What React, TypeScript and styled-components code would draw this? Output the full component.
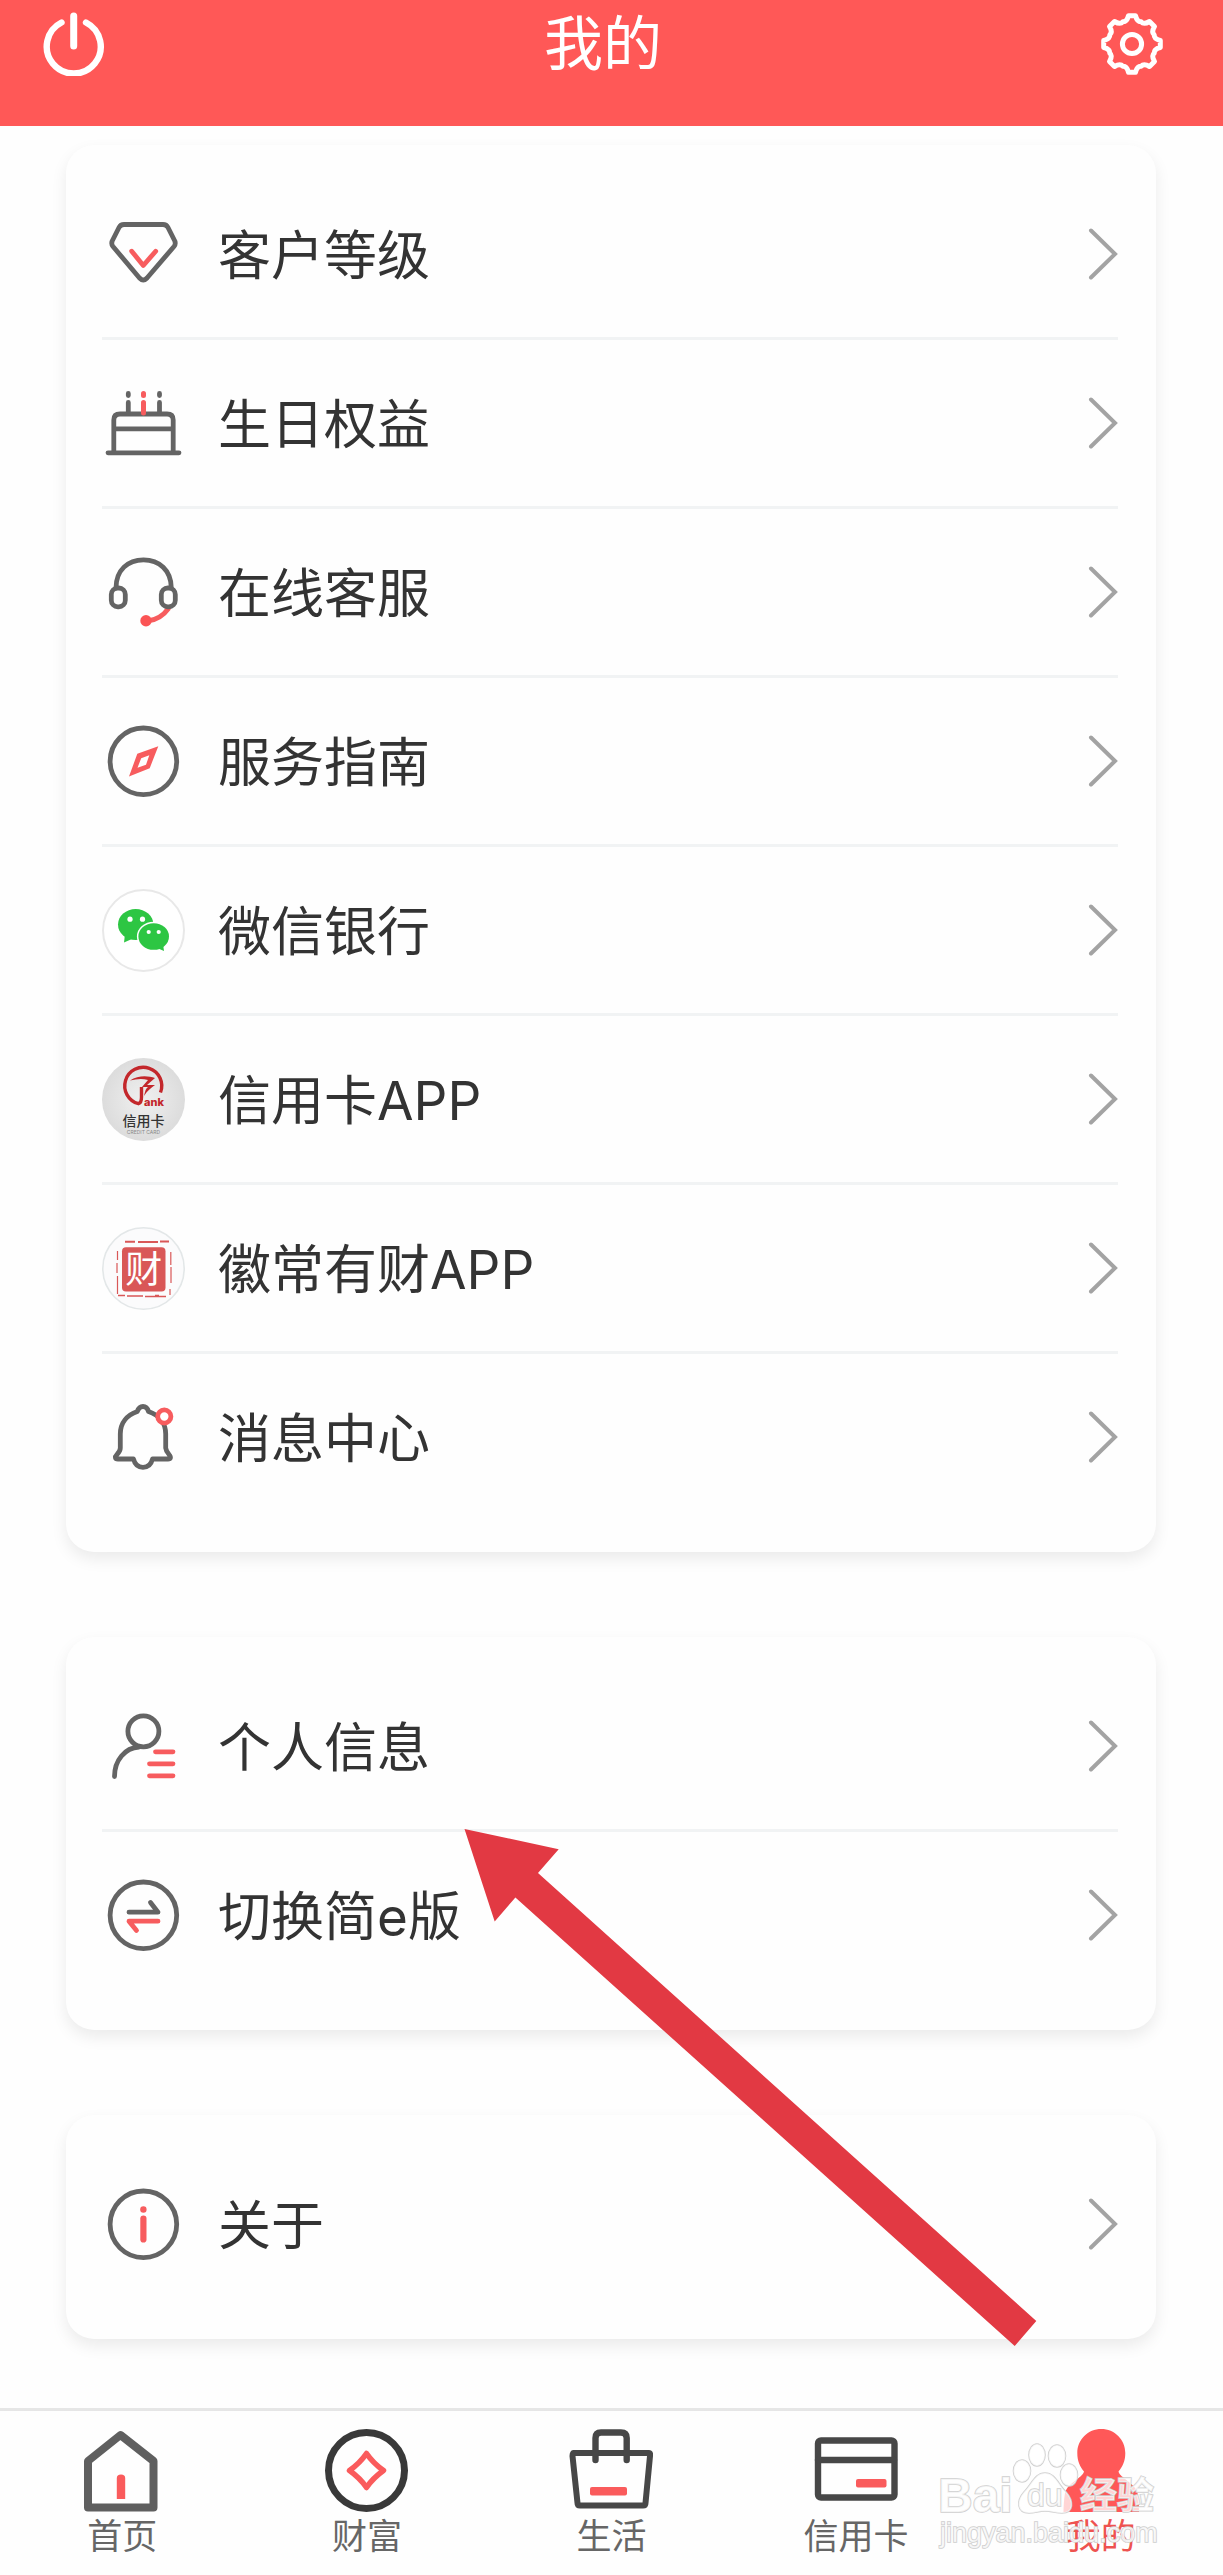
import React from "react";
import styled, { createGlobalStyle } from "styled-components";

const INK = "#646464";
const RED = "#f75c5e";
const FONT = '"Inter", "Noto Sans CJK SC", sans-serif';

const GlobalStyle = createGlobalStyle`
  *, *::before, *::after { box-sizing: border-box; }
  body { margin: 0; background: #fefefe; font-family: ${FONT}; color: #333; }
  button { font: inherit; color: inherit; background: none; border: 0; padding: 0; cursor: pointer; }
  svg { display: block; flex: none; }
`;

const Page = styled.div`
  display: flex;
  flex-direction: column;
  min-height: 100vh;
`;

const Header = styled.header`
  display: flex;
  align-items: center;
  justify-content: space-between;
  height: 126px;
  padding: 0 60px 38px 43px;
  background: #ff5857;
  color: #fff;
`;

const Title = styled.h1`
  margin: 0;
  font-size: 59px;
  line-height: 80px;
  font-weight: 400;
`;

const Main = styled.main`
  display: flex;
  flex: 1;
  flex-direction: column;
  gap: 85px;
  padding: 19px 67px 69px 66px;
`;

const Card = styled.section`
  position: relative;
  padding: 26px 38px 32px 36px;
  border-radius: 28px;
  background: #fefefe;
  box-shadow: 0 7px 16px rgba(0, 0, 0, 0.08);
`;

const List = styled.ul`
  margin: 0;
  padding: 0;
  list-style: none;
`;

const Item = styled.li`
  & + & {
    border-top: 3px solid #f1f3f4;
  }
`;

const Row = styled.button`
  display: flex;
  align-items: center;
  width: 100%;
  height: 166px;
  gap: 33px;
  text-align: left;
`;

const RowLabel = styled.span`
  flex: 1;
  padding-top: 3px;
  font-size: 53px;
  line-height: 72px;
`;

const Pointer = styled.svg`
  position: absolute;
  top: 192px;
  left: 398px;
  z-index: 2;
  pointer-events: none;
`;

const TabBar = styled.nav`
  position: relative;
  display: grid;
  grid-template-columns: repeat(5, 1fr);
  height: 167px;
  padding-top: 18px;
  border-top: 3px solid #e6e6e6;
`;

const Tab = styled.a<{ $active?: boolean }>`
  display: flex;
  flex-direction: column;
  align-items: center;
  gap: 3px;
  font-size: 35px;
  line-height: 40px;
  text-decoration: none;
  color: ${(p) => (p.$active ? "#ee5350" : "#666")};
`;

const Watermark = styled.svg`
  position: absolute;
  top: 29px;
  right: 63px;
  pointer-events: none;
`;

const Glyph = ({ children }: { children: React.ReactNode }) => (
  <svg width="83" height="83" viewBox="0 0 83 83" fill="none" stroke={INK} strokeWidth="4.800" strokeLinecap="round" strokeLinejoin="round" aria-hidden="true">
    {children}
  </svg>
);

const TabGlyph = ({ children }: { children: React.ReactNode }) => (
  <svg width="84" height="84" viewBox="0 0 84 84" fill="none" strokeLinecap="round" strokeLinejoin="round" aria-hidden="true">
    {children}
  </svg>
);

const Diamond = () => (
  <Glyph>
    <path d="M22 11.500H61Q64.500 11.500 66 14.500L72.800 28Q74 31 72 33.500L45 65Q41.300 69 37.500 65L11 33.500Q9 31 10.200 28L17 14.500Q18.500 11.500 22 11.500Z" />
    <path d="M29.700 38.200L41.300 52.500L53.700 38.200" stroke={RED} />
  </Glyph>
);

const Cake = () => (
  <Glyph>
    <path d="M6 70.800H77M11.800 70V38Q11.800 32 18 32H65Q71.200 32 71.200 38V70M12 46.800H71" />
    <path d="M26.300 20.500V31M26.300 11.500V13.500M57.500 20.500V31M57.500 11.500V13.500" />
    <path d="M41.500 20.500V31M41.500 11.500V13.500" stroke={RED} strokeWidth="5" />
  </Glyph>
);

const Headset = () => (
  <Glyph>
    <path d="M66.500 57.500C61 65 55 69 46 69.800" stroke={RED} />
    <path d="M14 37C14 19 26 8.800 41.500 8.800C57 8.800 69.300 19 69.300 37" />
    <rect x="9.300" y="37" width="14" height="18.800" rx="6.500" />
    <rect x="59.300" y="37" width="14" height="18.800" rx="6.500" />
    <circle cx="44" cy="69.800" r="5.700" fill="#fb5455" stroke="none" />
  </Glyph>
);

const Compass = () => (
  <Glyph>
    <circle cx="41.400" cy="41.300" r="33.300" />
    <path d="M56.300 26.200L35.300 33.800L27 56.500L47.700 48.200ZM47.300 35.300L44 44.800L35.500 47.800L39.200 38.200Z" fill={RED} fillRule="evenodd" stroke="none" />
  </Glyph>
);

const WeChat = () => (
  <Glyph>
    <circle cx="41.500" cy="41.500" r="40.500" fill="#fff" stroke="#e8e8e8" strokeWidth="2" />
    <g fill="#2dc643" stroke="none">
      <ellipse cx="33.700" cy="35.500" rx="17.700" ry="15.500" />
      <path d="M23 45L22 53.500L31 49.500Z" />
      <ellipse cx="51.700" cy="47.500" rx="16.800" ry="14.800" fill="#fff" />
      <ellipse cx="51.700" cy="47.500" rx="15.300" ry="13.300" />
      <path d="M61 55L62 62L54 58.500Z" />
    </g>
    <g fill="#fff" stroke="none">
      <circle cx="28" cy="30.200" r="2.600" />
      <circle cx="40.500" cy="30.200" r="2.600" />
      <circle cx="46.700" cy="43" r="2.100" />
      <circle cx="56.700" cy="43" r="2.100" />
    </g>
  </Glyph>
);

const CreditCard = () => (
  <Glyph>
    <defs>
      <radialGradient id="silver">
        <stop offset="0" stopColor="#f0f0f0" />
        <stop offset="1" stopColor="#dcdcdc" />
      </radialGradient>
    </defs>
    <circle cx="41.500" cy="41.500" r="41.500" fill="url(#silver)" stroke="none" />
    <path d="M58.500 34.500A18.500 18.500 0 1 0 36.500 45.700C39 45 39.500 43 39.500 39V29" stroke="#c3272b" strokeWidth="3.400" strokeLinecap="butt" />
    <path d="M28 22.500C36 17 46 17.500 53 20L45 27H53C49 30 45 33 42 38C43 33 44 30 46 29H40L46 22C40 20 34 21 28 22.500Z" fill="#c3272b" stroke="none" />
    <g stroke="none" fontFamily={FONT}>
      <text x="42" y="48" fontSize="11" fontWeight="800" fill="#c3272b">ank</text>
      <text x="20.500" y="68" fontSize="14" fontWeight="500" fill="#333">信用卡</text>
      <text x="41.500" y="76" fontSize="5" textAnchor="middle" fill="#888">CREDIT CARD</text>
    </g>
  </Glyph>
);

const Seal = () => (
  <Glyph>
    <circle cx="41.500" cy="41.500" r="40.700" fill="#fbfbfc" stroke="#e3e7e8" strokeWidth="1.600" />
    <g stroke="#d95757" strokeLinecap="butt">
      <path d="M23 14.700H33M36 15H56M58 14.500H67" strokeWidth="2" />
      <path d="M15.500 24V33M15 36V46M15.500 49V67M68.800 25V38M69 40V56M68 62V68" strokeWidth="1.200" />
      <path d="M16 68.500H23M25 69H41M43 69.500H64M53 68.500H57" strokeWidth="1.600" />
    </g>
    <rect x="20" y="20.200" width="43.500" height="44.300" rx="4" fill="#d95757" stroke="none" />
    <text x="41.700" y="56" fontSize="37" textAnchor="middle" fill="#fff" stroke="none" fontFamily={FONT}>财</text>
  </Glyph>
);

const Bell = () => (
  <Glyph>
    <path d="M35.300 15.500Q37 10.500 41 10.500Q45 10.500 46.500 15.500C57 19 63.700 27 63.700 38V52Q64 55 67 58.500C69.500 61.500 68.500 63 66 63H50.500Q48.500 71.300 41 71.300Q33.500 71.300 31.500 63H16C13 63 12.500 61 15 58.500Q18.300 55 18.300 52V38C18.300 27 25 19 35.300 15.500Z" />
    <circle cx="62.300" cy="20.500" r="6.600" fill="#fff" stroke={RED} />
  </Glyph>
);

const Profile = () => (
  <Glyph>
    <circle cx="41.400" cy="26.300" r="15.500" />
    <path d="M12.500 71.500C12.500 55 23 43 37 42" />
    <path d="M53.500 46.800H71M47.500 58.800H71M47.500 70.800H71" stroke={RED} />
  </Glyph>
);

const Swap = () => (
  <Glyph>
    <circle cx="41.400" cy="41.300" r="33.300" />
    <path d="M27 38.200H56L48.500 28.500" />
    <path d="M56 47.200H27L34.500 56.500" stroke={RED} />
  </Glyph>
);

const Info = () => (
  <Glyph>
    <circle cx="41.400" cy="41.300" r="33.300" />
    <path d="M41.400 35.500V56.500" stroke={RED} strokeWidth="6.200" />
    <circle cx="41.400" cy="26.500" r="3.200" fill={RED} stroke="none" />
  </Glyph>
);

const Chevron = () => (
  <svg width="30" height="52" viewBox="0 0 30 52" fill="none" stroke="#a3a3a3" strokeWidth="4" strokeLinecap="round" aria-hidden="true">
    <path d="M3 2.500L27 26L3 49.500" />
  </svg>
);

const Power = () => (
  <svg width="62" height="64" viewBox="0 0 62 64" fill="none" stroke="#fff" strokeLinecap="round" aria-hidden="true">
    <path d="M30.700 4V34" strokeWidth="7" />
    <path d="M18.500 10.500A27 27 0 1 0 43 10.500" strokeWidth="6.400" />
  </svg>
);

// Closed outline with eight rounded teeth, alternating between crest and valley radii.
const gearPath = () => {
  const at = (radius: number, degrees: number) => {
    const a = (degrees * Math.PI) / 180;
    return `${(31 + radius * Math.sin(a)).toFixed(1)} ${(31 - radius * Math.cos(a)).toFixed(1)}`;
  };
  const parts: string[] = [`M${at(28.5, -7)}`];
  for (let i = 0; i < 8; i += 1) {
    const c = i * 45;
    parts.push(`L${at(28.5, c + 7)}`, `Q${at(22.5, c + 13)} ${at(24, c + 22.5)}`, `Q${at(22.5, c + 32)} ${at(28.5, c + 38)}`);
  }
  return `${parts.join("")}Z`;
};

const Gear = () => (
  <svg width="62" height="62" viewBox="0 0 62 62" fill="none" stroke="#fff" strokeWidth="5" strokeLinejoin="round" aria-hidden="true">
    <path d={gearPath()} />
    <circle cx="31" cy="31" r="9.600" />
  </svg>
);

const Home = () => (
  <TabGlyph>
    <path d="M40.500 6L8 32V78.500H73.500V32Z" stroke="#5f5f5f" strokeWidth="8" />
    <path d="M36.800 70V49Q36.800 45.500 41 45.500Q45.200 45.500 45.200 49V70Z" fill="#fa5b5c" />
  </TabGlyph>
);

const Wealth = () => (
  <TabGlyph>
    <circle cx="41.500" cy="41.500" r="38" stroke="#393939" strokeWidth="7" />
    <path d="M41.500 24.500Q48 34 58.500 41.500Q48 49 41.500 58.500Q35 49 24.500 41.500Q35 34 41.500 24.500Z" stroke="#fa5b5c" strokeWidth="5.500" />
  </TabGlyph>
);

const Bag = () => (
  <TabGlyph>
    <path d="M4.500 24H80Q81.500 24 81 27L76.500 74Q76.500 76.500 74 76.500H11Q8.500 76.500 8.500 74L3.500 27Q3.500 24 5 24Z" stroke="#474747" strokeWidth="6" />
    <path d="M26.500 31V9Q26.500 3.500 32 3.500H52Q57.700 3.500 57.700 9V31" stroke="#474747" strokeWidth="6.400" />
    <rect x="21" y="58" width="37" height="8.500" rx="2" fill="#fa5b5c" />
  </TabGlyph>
);

const BankCard = () => (
  <TabGlyph>
    <rect x="4" y="11.500" width="76.500" height="57" rx="3" stroke="#474747" strokeWidth="6.400" />
    <path d="M4 31H80" stroke="#474747" strokeWidth="6.400" />
    <rect x="42" y="50" width="30.500" height="8.500" rx="2" fill="#fa5b5c" />
  </TabGlyph>
);

const Me = () => (
  <TabGlyph>
    <path d="M42.300 0C55.500 0 66.300 10.500 66.300 24C66.300 32 63.500 38 59.500 42.500C61 49 76 54 78.500 64C79.500 70 80 77 80 83H4.500C4.500 77 5 70 6 64C8.500 54 23.500 49 25 42.500C21 38 18.300 32 18.300 24C18.300 10.500 29 0 42.300 0Z" fill="#ff5858" />
  </TabGlyph>
);

type Entry = { label: string; Icon: () => React.ReactElement };

const services: Entry[] = [
  { label: "客户等级", Icon: Diamond },
  { label: "生日权益", Icon: Cake },
  { label: "在线客服", Icon: Headset },
  { label: "服务指南", Icon: Compass },
  { label: "微信银行", Icon: WeChat },
  { label: "信用卡APP", Icon: CreditCard },
  { label: "徽常有财APP", Icon: Seal },
  { label: "消息中心", Icon: Bell },
];

const account: Entry[] = [
  { label: "个人信息", Icon: Profile },
  { label: "切换简e版", Icon: Swap },
];

const about: Entry[] = [{ label: "关于", Icon: Info }];

const tabs: (Entry & { href: string; active?: boolean })[] = [
  { label: "首页", Icon: Home, href: "#home" },
  { label: "财富", Icon: Wealth, href: "#wealth" },
  { label: "生活", Icon: Bag, href: "#life" },
  { label: "信用卡", Icon: BankCard, href: "#card" },
  { label: "我的", Icon: Me, href: "#me", active: true },
];

const Menu = ({ entries, children }: { entries: Entry[]; children?: React.ReactNode }) => (
  <Card>
    <List>
      {entries.map(({ label, Icon }) => (
        <Item key={label}>
          <Row type="button">
            <Icon />
            <RowLabel>{label}</RowLabel>
            <Chevron />
          </Row>
        </Item>
      ))}
    </List>
    {children}
  </Card>
);

export default function App() {
  return (
    <Page>
      <GlobalStyle />
      <Header>
        <button type="button" aria-label="退出">
          <Power />
        </button>
        <Title>我的</Title>
        <button type="button" aria-label="设置">
          <Gear />
        </button>
      </Header>
      <Main>
        <Menu entries={services} />
        <Menu entries={account}>
          <Pointer width="574" height="518" viewBox="0 0 574 518" aria-hidden="true">
            <path d="M0.500 0L94.700 20.300L74 44L572.300 492L550.700 517L51.400 68.500L30.700 92.500Z" fill="#e23943" />
          </Pointer>
        </Menu>
        <Menu entries={about} />
      </Main>
      <TabBar>
        {tabs.map(({ label, Icon, href, active }) => (
          <Tab key={label} href={href} $active={active} aria-current={active ? "page" : undefined}>
            <Icon />
            {label}
          </Tab>
        ))}
        <Watermark width="222" height="124" viewBox="0 0 222 124" aria-hidden="true">
          <g fill="#fff" fillOpacity="0.75" stroke="#cfcfcf" strokeWidth="1.600" fontFamily='"Liberation Sans", "Noto Sans CJK SC", sans-serif' fontWeight="700" paintOrder="stroke">
            <text x="0" y="72" fontSize="48">Bai</text>
            <ellipse cx="84" cy="31" rx="8.500" ry="11" />
            <ellipse cx="99" cy="15" rx="8" ry="11" />
            <ellipse cx="119" cy="16" rx="8.500" ry="11" />
            <ellipse cx="131" cy="35" rx="8.500" ry="11" />
            <path d="M107 33C117 33 120 44 128 52C136 61 136 73 124 73C118 73 113 71 107 71C101 71 97 73 91 73C79 73 78 61 86 52C94 44 97 33 107 33Z" />
            <text x="89" y="66" fontSize="32" fontWeight="400">du</text>
            <text x="142" y="69" fontSize="37" fontFamily='"Noto Sans CJK SC", sans-serif'>经验</text>
            <text x="2" y="102" fontSize="27" fontWeight="400">jingyan.baidu.com</text>
          </g>
        </Watermark>
      </TabBar>
    </Page>
  );
}
